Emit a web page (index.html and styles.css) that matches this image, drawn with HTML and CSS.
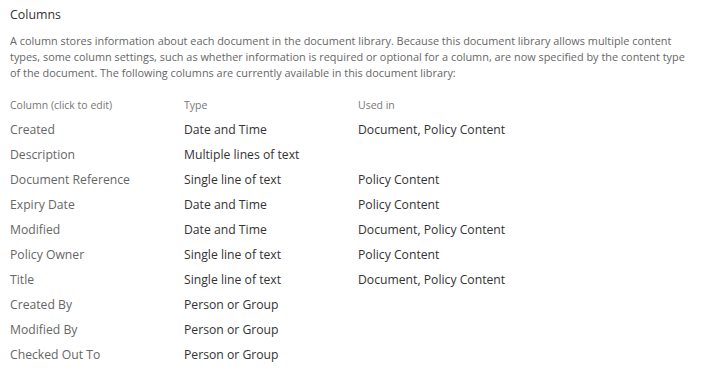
FILE: index.html
```html
<!DOCTYPE html>
<html lang="en">
<head>
    <meta charset="UTF-8">
    <meta name="viewport" content="width=device-width, initial-scale=1.0">
    <title>Columns</title>
    <link rel="stylesheet" href="styles.css">
</head>
<body>

<div class="section">
  <h2 class="section-title">Columns</h2>
  <p class="section-desc">A column stores information about each document in the document library. Because this document library allows multiple content types, some column settings, such as whether information is required or optional for a column, are now specified by the content type of the document. The following columns are currently available in this document library:</p>

  <div class="col-table">
    <div class="col-head">Column (click to edit)</div>
    <div class="col-head">Type</div>
    <div class="col-head">Used in</div>

    <div class="col-name">Created</div>
    <div class="col-cell">Date and Time</div>
    <div class="col-cell">Document, Policy Content</div>

    <div class="col-name">Description</div>
    <div class="col-cell">Multiple lines of text</div>
    <div class="col-cell"></div>

    <div class="col-name">Document Reference</div>
    <div class="col-cell">Single line of text</div>
    <div class="col-cell">Policy Content</div>

    <div class="col-name">Expiry Date</div>
    <div class="col-cell">Date and Time</div>
    <div class="col-cell">Policy Content</div>

    <div class="col-name">Modified</div>
    <div class="col-cell">Date and Time</div>
    <div class="col-cell">Document, Policy Content</div>

    <div class="col-name">Policy Owner</div>
    <div class="col-cell">Single line of text</div>
    <div class="col-cell">Policy Content</div>

    <div class="col-name">Title</div>
    <div class="col-cell">Single line of text</div>
    <div class="col-cell">Document, Policy Content</div>

    <div class="col-name">Created By</div>
    <div class="col-cell">Person or Group</div>
    <div class="col-cell"></div>

    <div class="col-name">Modified By</div>
    <div class="col-cell">Person or Group</div>
    <div class="col-cell"></div>

    <div class="col-name">Checked Out To</div>
    <div class="col-cell">Person or Group</div>
    <div class="col-cell"></div>
  </div>
</div>

</body>
</html>
```

FILE: styles.css
```css
/*CSS RESETS*/

body {
    margin: 0;
    background-color: #ffffff;
    font-family: "Open Sans", "Noto Sans", sans-serif;
}

h2, p {
    margin: 0;
}


/*CSS START*/

.section {
    padding: 5px 10px 0 10px;
}

.section-title {
    font-size: 12.4px;
    font-weight: 400;
    line-height: 20px;
    color: #333333;
}

.section-desc {
    width: 686px;
    margin-top: 8px;
    font-size: 10.9px;
    line-height: 16px;
    color: #666666;
}

.col-table {
    display: grid;
    grid-template-columns: 174px 174px auto;
    margin-top: 12px;
}

.col-head {
    height: 24px;
    font-size: 10.5px;
    line-height: 24px;
    color: #777777;
}

.col-name,
.col-cell {
    height: 25px;
    font-size: 12.2px;
    line-height: 25px;
    color: #666666;
}

.col-cell {
    color: #333333;
}
```
